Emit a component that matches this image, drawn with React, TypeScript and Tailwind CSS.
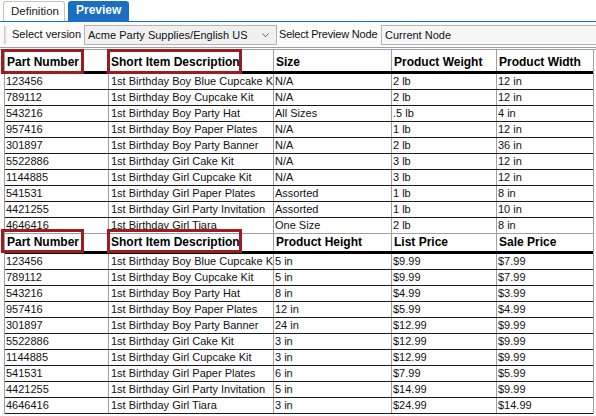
const rows = [
  ["123456", "1st Birthday Boy Blue Cupcake Kit", "N/A", "2 lb", "12 in", "5 in", "$9.99", "$7.99"],
  ["789112", "1st Birthday Boy Cupcake Kit", "N/A", "2 lb", "12 in", "5 in", "$9.99", "$7.99"],
  ["543216", "1st Birthday Boy Party Hat", "All Sizes", ".5 lb", "4 in", "8 in", "$4.99", "$3.99"],
  ["957416", "1st Birthday Boy Paper Plates", "N/A", "1 lb", "12 in", "12 in", "$5.99", "$4.99"],
  ["301897", "1st Birthday Boy Party Banner", "N/A", "2 lb", "36 in", "24 in", "$12.99", "$9.99"],
  ["5522886", "1st Birthday Girl Cake Kit", "N/A", "3 lb", "12 in", "3 in", "$12.99", "$9.99"],
  ["1144885", "1st Birthday Girl Cupcake Kit", "N/A", "3 lb", "12 in", "3 in", "$12.99", "$9.99"],
  ["541531", "1st Birthday Girl Paper Plates", "Assorted", "1 lb", "8 in", "6 in", "$7.99", "$5.99"],
  ["4421255", "1st Birthday Girl Party Invitation", "Assorted", "1 lb", "10 in", "5 in", "$14.99", "$9.99"],
  ["4646416", "1st Birthday Girl Tiara", "One Size", "2 lb", "8 in", "3 in", "$24.99", "$14.99"],
];

const widths = ["w-[104px]", "w-[165px]", "w-[118px]", "w-[105px]", "w-[96px]"];

const HeaderRow = ({ labels, tall }: { labels: string[]; tall?: boolean }) => (
  <div className={`flex border-b-[3px] border-black ${tall ? "h-[24px]" : "h-[20px]"}`}>
    {labels.map((l, i) => (
      <div
        key={i}
        className={`relative ${widths[i]} shrink-0 flex items-end pb-[1px] pl-[2px] text-[12px] font-bold leading-[16px] text-black ${
          i < 4 ? "border-r border-[#a0a0a0]" : ""
        }`}
      >
        {l}
        {i === 0 && (
          <div
            className={`absolute left-[-4px] w-[83px] border-[3px] border-[#9e1b22] ${
              tall ? "top-[-1px] h-[25px]" : "top-[-5px] h-[24px]"
            }`}
          />
        )}
        {i === 1 && (
          <div
            className={`absolute left-[-2px] w-[135px] border-[3px] border-[#9e1b22] ${
              tall ? "top-[-1px] h-[25px]" : "top-[-5px] h-[24px]"
            }`}
          />
        )}
      </div>
    ))}
  </div>
);

const DataRow = ({ cells, last }: { cells: string[]; last?: boolean }) => (
  <div className={`flex h-[16px] border-b ${last ? "border-[#a0a0a0]" : "border-[#1a1a1a]"}`}>
    {cells.map((c, i) => (
      <div
        key={i}
        className={`${widths[i]} shrink-0 overflow-hidden whitespace-nowrap ${i === 1 ? "pl-[2px]" : "pl-[1px]"} text-[11px] leading-[15px] text-[#111] ${
          i < 4 ? "border-r border-[#a0a0a0]" : ""
        }`}
      >
        {c}
      </div>
    ))}
  </div>
);

export default function App() {
  return (
    <div className="w-[596px] h-[416px] overflow-hidden bg-white font-['Liberation_Sans',Arial,sans-serif]">
      {/* tabs */}
      <div className="h-[22px] flex items-end gap-[3px] pl-[3px] border-b border-[#1b6ec2]">
        <div className="h-[20px] w-[62px] border border-b-0 border-[#c4c4c4] rounded-t-[3px] bg-white pl-[7px] text-[11.5px] leading-[19px] text-[#222]">
          Definition
        </div>
        <div className="h-[20px] w-[61px] rounded-t-[3px] bg-[#1b6ec2] pl-[8px] text-[12px] font-bold leading-[18px] text-white">
          Preview
        </div>
      </div>

      {/* toolbar */}
      <div className="h-[26px] flex items-center bg-[#fbfbfb] border-b border-[#a0a0a0] text-[11px] text-[#111] whitespace-nowrap">
        <div className="ml-[4px] h-[18px] w-[3px] border-l border-r border-l-[#c8c8c8] border-r-[#f0f0f0] bg-[#e6e6e6]" />
        <span className="ml-[5px] w-[72px]">Select version</span>
        <div className="relative h-[20px] w-[193px] border border-[#b4b4b4] bg-[#f0f0f0] pl-[3px] leading-[18px]">
          Acme Party Supplies/English US
          <svg className="absolute right-[7px] top-[7px]" width="7" height="5" viewBox="0 0 7 5">
            <path d="M0.5 0.5 L3.5 3.8 L6.5 0.5" fill="none" stroke="#606060" strokeWidth="1" />
          </svg>
        </div>
        <span className="ml-[2px] w-[102px] shrink-0 tracking-[-0.2px]">Select Preview Node</span>
        <div className="h-[20px] flex-1 border border-r-0 border-[#b4b4b4] bg-[#f7f7f7] pl-[3px] leading-[18px]">
          Current Node
        </div>
      </div>
      <div className="h-[2px] border-b border-[#a0a0a0]" />

      {/* table */}
      <div className="ml-[4px] w-[590px] border-l border-r border-[#a0a0a0]">
        <HeaderRow tall labels={["Part Number", "Short Item Description", "Size", "Product Weight", "Product Width"]} />
        {rows.map((r, i) => (
          <DataRow key={i} last={i === rows.length - 1} cells={[r[0], r[1], r[2], r[3], r[4]]} />
        ))}
        <HeaderRow labels={["Part Number", "Short Item Description", "Product Height", "List Price", "Sale Price"]} />
        {rows.map((r, i) => (
          <DataRow key={i} cells={[r[0], r[1], r[5], r[6], r[7]]} />
        ))}
      </div>
    </div>
  );
}
